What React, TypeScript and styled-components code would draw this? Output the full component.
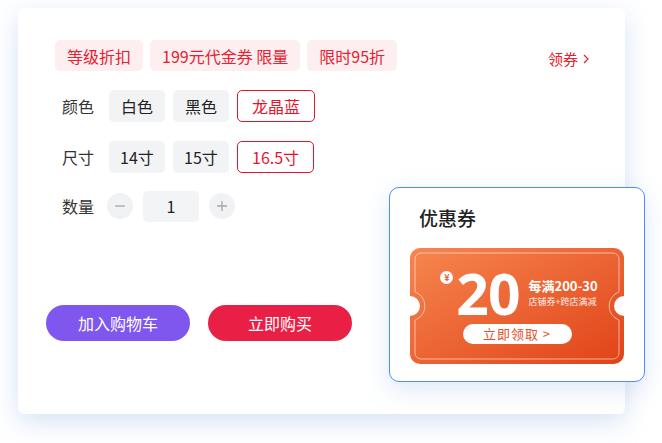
import styled, { createGlobalStyle } from "styled-components";

const GlobalStyle = createGlobalStyle`
  html, body {
    margin: 0;
    padding: 0;
    background: #ffffff;
  }
  body {
    font-family: "Noto Sans CJK SC", "Noto Sans", sans-serif;
    color: #222;
  }
`;

const tags = ["等级折扣", "199元代金券 限量", "限时95折"];
const colors = ["白色", "黑色", "龙晶蓝"];
const sizes = ["14寸", "15寸", "16.5寸"];

const App = () => {
  return (
    <>
      <GlobalStyle />
      <Stage>
        <Card>
          <Body>
            <TagRow>
              <Tags>
                {tags.map((t) => (
                  <Tag key={t}>{t}</Tag>
                ))}
              </Tags>
              <GetCoupon>
                领券
                <svg width="8" height="10" viewBox="0 0 8 10">
                  <path d="M2 1 L6 5 L2 9" fill="none" stroke="#e8202f" strokeWidth="1.2" />
                </svg>
              </GetCoupon>
            </TagRow>

            <Row>
              <Label>颜色</Label>
              {colors.map((c, i) => (
                <Option key={c} $active={i === 2}>
                  {c}
                </Option>
              ))}
            </Row>

            <Row>
              <Label>尺寸</Label>
              {sizes.map((s, i) => (
                <Option key={s} $active={i === 2}>
                  {s}
                </Option>
              ))}
            </Row>

            <Row $shift={-2}>
              <Label>数量</Label>
              <Stepper>
                <RoundBtn>
                  <svg width="12" height="12" viewBox="0 0 12 12">
                    <path d="M1 6 H11" stroke="#a4a7ad" strokeWidth="1.3" />
                  </svg>
                </RoundBtn>
                <Count>1</Count>
                <RoundBtn>
                  <svg width="12" height="12" viewBox="0 0 12 12">
                    <path d="M1 6 H11 M6 1 V11" stroke="#a4a7ad" strokeWidth="1.3" />
                  </svg>
                </RoundBtn>
              </Stepper>
            </Row>
          </Body>

          <Actions>
            <ActionBtn $bg="#7f56ee">加入购物车</ActionBtn>
            <ActionBtn $bg="#ea1f46">立即购买</ActionBtn>
          </Actions>

          <CouponBox>
            <CouponTitle>优惠券</CouponTitle>
            <Ticket>
              <TicketBg width="214" height="116" viewBox="0 0 214 116">
                <defs>
                  <linearGradient id="tg" x1="0" y1="0" x2="1" y2="1">
                    <stop offset="0" stopColor="#f7864f" />
                    <stop offset="1" stopColor="#e04318" />
                  </linearGradient>
                </defs>
                <path
                  d="M10 0 H204 A10 10 0 0 1 214 10 V48 A10 10 0 0 0 214 68 V106 A10 10 0 0 1 204 116 H10 A10 10 0 0 1 0 106 V68 A10 10 0 0 0 0 48 V10 A10 10 0 0 1 10 0 Z"
                  fill="url(#tg)"
                />
                <path
                  d="M11 5 H203 A6 6 0 0 1 209 11 V43.9 A15 15 0 0 0 209 72.1 V105 A6 6 0 0 1 203 111 H11 A6 6 0 0 1 5 105 V72.1 A15 15 0 0 0 5 43.9 V11 A6 6 0 0 1 11 5 Z"
                  fill="none"
                  stroke="rgba(255,255,255,0.55)"
                  strokeWidth="1"
                />
              </TicketBg>
              <TicketMain>
                <Yen>¥</Yen>
                <Amount>20</Amount>
                <Rule>
                  <RuleMain>每满200-30</RuleMain>
                  <RuleSub>店铺券+跨店满减</RuleSub>
                </Rule>
              </TicketMain>
              <ClaimBtn>立即领取 &gt;</ClaimBtn>
            </Ticket>
          </CouponBox>
        </Card>
      </Stage>
    </>
  );
};

export default App;

const Stage = styled.div`
  width: 662px;
  height: 443px;
  padding: 8px 0 0 18px;
  box-sizing: border-box;
`;

const Card = styled.div`
  position: relative;
  width: 607px;
  height: 406px;
  box-sizing: border-box;
  padding: 32px 35px 0 28px;
  background: #fff;
  border-radius: 6px;
  box-shadow: 0 8px 26px rgba(150, 178, 228, 0.38);
  display: flex;
  flex-direction: column;
`;

const Body = styled.div`
  display: flex;
  flex-direction: column;
  gap: 19px;
  padding-left: 9px;
`;

const TagRow = styled.div`
  display: flex;
  align-items: center;
  justify-content: space-between;
`;

const Tags = styled.div`
  display: flex;
  gap: 7px;
`;

const Tag = styled.div`
  height: 31px;
  padding: 0 12px;
  display: flex;
  align-items: center;
  border-radius: 5px;
  background: #fdeef0;
  color: #e8202f;
  font-size: 16px;
`;

const GetCoupon = styled.div`
  display: flex;
  align-items: center;
  gap: 4px;
  margin-top: 6px;
  color: #e8202f;
  font-size: 15px;
`;

const Row = styled.div<{ $shift?: number }>`
  display: flex;
  align-items: center;
  gap: 8px;
  height: 32px;
  margin-top: ${(p) => p.$shift ?? 0}px;
`;

const Label = styled.div`
  width: 46px;
  text-align: center;
  font-size: 16px;
  color: #333;
`;

const Option = styled.div<{ $active?: boolean }>`
  height: 32px;
  min-width: 56px;
  box-sizing: border-box;
  padding: 0 ${(p) => (p.$active ? "14px" : "11px")};
  display: flex;
  align-items: center;
  justify-content: center;
  border-radius: 5px;
  font-size: 16px;
  color: ${(p) => (p.$active ? "#e8132b" : "#222")};
  background: ${(p) => (p.$active ? "#fff" : "#f2f3f5")};
  border: ${(p) => (p.$active ? "1px solid #e8132b" : "none")};
`;

const Stepper = styled.div`
  display: flex;
  align-items: center;
  gap: 10px;
  margin-left: -2px;
`;

const RoundBtn = styled.div`
  width: 26px;
  height: 26px;
  border-radius: 50%;
  background: #f1f2f4;
  display: flex;
  align-items: center;
  justify-content: center;
`;

const Count = styled.div`
  width: 56px;
  height: 31px;
  border-radius: 5px;
  background: #f3f4f6;
  display: flex;
  align-items: center;
  justify-content: center;
  font-size: 16px;
  color: #222;
`;

const Actions = styled.div`
  display: flex;
  gap: 18px;
  margin-top: 83px;
`;

const ActionBtn = styled.div<{ $bg: string }>`
  width: 144px;
  height: 36px;
  border-radius: 18px;
  background: ${(p) => p.$bg};
  color: #fff;
  font-size: 16px;
  display: flex;
  align-items: center;
  justify-content: center;
`;

const CouponBox = styled.div`
  position: absolute;
  left: 371px;
  top: 179px;
  width: 256px;
  height: 195px;
  box-sizing: border-box;
  border: 1px solid #4d8ff7;
  border-radius: 10px;
  background: #fff;
  box-shadow: 0 8px 24px rgba(150, 178, 228, 0.3);
  padding: 17px 0 0 20px;
`;

const CouponTitle = styled.div`
  padding-left: 9px;
  font-size: 19px;
  font-weight: 500;
  color: #222;
  line-height: 26px;
`;

const Ticket = styled.div`
  position: relative;
  width: 214px;
  height: 116px;
  margin-top: 17px;
  display: flex;
  flex-direction: column;
  align-items: center;
`;

const TicketBg = styled.svg`
  position: absolute;
  left: 0;
  top: 0;
`;

const TicketMain = styled.div`
  position: relative;
  display: flex;
  align-items: flex-start;
  margin-top: 17px;
  margin-left: 4px;
  color: #fff;
`;

const Yen = styled.div`
  width: 13px;
  height: 13px;
  border-radius: 50%;
  background: #fff;
  color: #e9582a;
  font-size: 9px;
  font-weight: 700;
  line-height: 13px;
  text-align: center;
  margin-top: 6px;
  margin-right: 3px;
`;

const Amount = styled.div`
  font-family: "Noto Sans", sans-serif;
  font-size: 57px;
  font-weight: 700;
  line-height: 56px;
  letter-spacing: -1px;
`;

const Rule = styled.div`
  display: flex;
  flex-direction: column;
  margin-left: 9px;
  margin-top: 12px;
`;

const RuleMain = styled.div`
  font-size: 13px;
  font-weight: 700;
  line-height: 18px;
`;

const RuleSub = styled.div`
  font-size: 9px;
  line-height: 13px;
  opacity: 0.9;
`;

const ClaimBtn = styled.div`
  position: relative;
  width: 109px;
  height: 20px;
  margin-top: 3px;
  border-radius: 10px;
  background: #fff;
  color: #e4502a;
  font-size: 13px;
  line-height: 20px;
  text-align: center;
  letter-spacing: 1px;
`;
